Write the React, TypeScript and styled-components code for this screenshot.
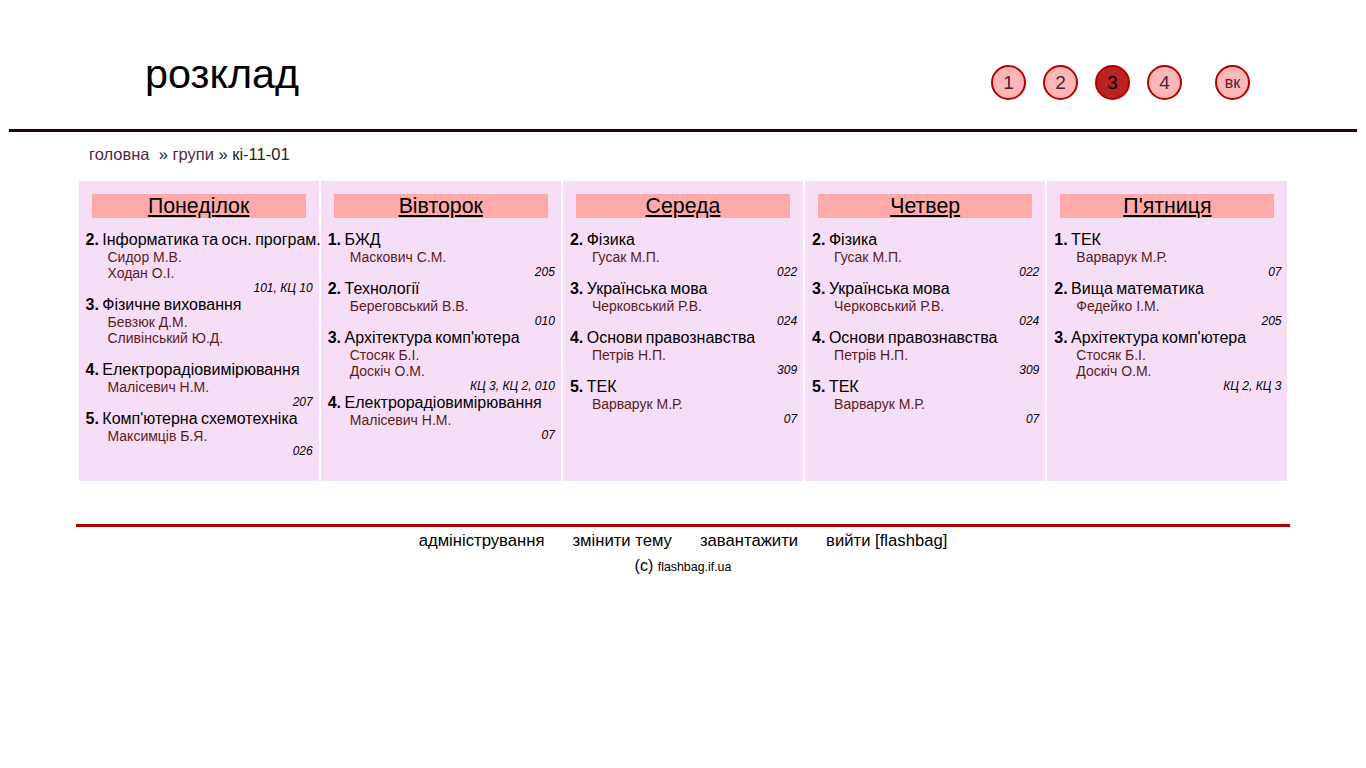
import { createGlobalStyle, styled } from "styled-components";

const GlobalStyle = createGlobalStyle`
  body {
    margin: 0;
    background: #fff;
    font-family: "Liberation Sans", Arial, sans-serif;
    color: #000;
  }
`;

const Header = styled.header`
  display: flex;
  justify-content: space-between;
  align-items: flex-start;
  height: 129px;
  margin: 0 9px;
  border-bottom: 3px solid #2b0000;
`;

const Title = styled.h1`
  margin: 49px 0 0 136px;
  font-size: 41.3px;
  font-weight: normal;
  line-height: 50px;
`;

const Nav = styled.nav`
  display: flex;
  gap: 17px;
  margin: 65px 107px 0 0;
`;

const Circle = styled.a<{ $active?: boolean; $far?: boolean }>`
  width: 35px;
  height: 35px;
  box-sizing: border-box;
  border-radius: 50%;
  border: 2px solid #b30000;
  background: ${(p) => (p.$active ? "#bb2222" : "#ffb6b6")};
  color: ${(p) => (p.$active ? "#000" : "#4d2438")};
  display: flex;
  align-items: center;
  justify-content: center;
  font-size: ${(p) => (p.$far ? "16px" : "19px")};
  margin-left: ${(p) => (p.$far ? "16px" : "0")};
  text-decoration: none;
`;

const Crumbs = styled.div`
  padding: 13px 0 0 89px;
  font-size: 16.5px;
  line-height: 18px;
  color: #222;
`;

const CrumbLink = styled.a`
  color: #4d2a3d;
  text-decoration: none;
`;

const Week = styled.div`
  width: 1209px;
  min-height: 300px;
  margin: 18px auto 0;
  display: grid;
  grid-template-columns: repeat(5, minmax(0, 1fr));
  gap: 2px;
`;

const Day = styled.div`
  background: #f7def7;
  padding: 13px 6px 8px 7px;
`;

const DayName = styled.div`
  margin: 0 7px 12px 6px;
  height: 24px;
  line-height: 24px;
  background: #ffaaaa;
  text-align: center;
  font-size: 21.33px;
  text-decoration: underline;
`;

const Lesson = styled.div`
  display: flex;
  flex-direction: column;
`;

const Subject = styled.div`
  position: relative;
  font-size: 16px;
  line-height: 19px;
  white-space: nowrap;
  word-spacing: -1px;
  b {
    font-weight: bold;
  }
`;

const Teacher = styled.div`
  padding-left: 22px;
  font-size: 14px;
  line-height: 16px;
  color: #5b1c1c;
  &:first-of-type {
    margin-top: 1px;
  }
`;

const Room = styled.div`
  text-align: right;
  font-size: 12px;
  line-height: 14px;
  height: 14px;
  font-style: italic;
`;

const Footer = styled.footer`
  width: 1214px;
  margin: 43px auto 0;
  border-top: 3px solid #b30000;
  padding-top: 4px;
  text-align: center;
`;

const FooterLinks = styled.div`
  display: flex;
  justify-content: center;
  gap: 28px;
  font-size: 16.67px;
  line-height: 19px;
`;

const FooterLink = styled.a`
  color: #000;
  text-decoration: none;
`;

const Copy = styled.div`
  margin-top: 7px;
  font-size: 16px;
  line-height: 17px;
  small {
    font-size: 12.4px;
  }
`;

type LessonData = { n: number; name: string; teachers: string[]; room: string };

const week: { day: string; lessons: LessonData[] }[] = [
  {
    day: "Понеділок",
    lessons: [
      { n: 2, name: "Інформатика та осн. програм.", teachers: ["Сидор М.В.", "Ходан О.І."], room: "101, КЦ 10" },
      { n: 3, name: "Фізичне виховання", teachers: ["Бевзюк Д.М.", "Сливінський Ю.Д."], room: "" },
      { n: 4, name: "Електрорадіовимірювання", teachers: ["Малісевич Н.М."], room: "207" },
      { n: 5, name: "Комп'ютерна схемотехніка", teachers: ["Максимців Б.Я."], room: "026" },
    ],
  },
  {
    day: "Вівторок",
    lessons: [
      { n: 1, name: "БЖД", teachers: ["Маскович С.М."], room: "205" },
      { n: 2, name: "Технології", teachers: ["Береговський В.В."], room: "010" },
      { n: 3, name: "Архітектура комп'ютера", teachers: ["Стосяк Б.І.", "Доскіч О.М."], room: "КЦ 3, КЦ 2, 010" },
      { n: 4, name: "Електрорадіовимірювання", teachers: ["Малісевич Н.М."], room: "07" },
    ],
  },
  {
    day: "Середа",
    lessons: [
      { n: 2, name: "Фізика", teachers: ["Гусак М.П."], room: "022" },
      { n: 3, name: "Українська мова", teachers: ["Черковський Р.В."], room: "024" },
      { n: 4, name: "Основи правознавства", teachers: ["Петрів Н.П."], room: "309" },
      { n: 5, name: "ТЕК", teachers: ["Варварук М.Р."], room: "07" },
    ],
  },
  {
    day: "Четвер",
    lessons: [
      { n: 2, name: "Фізика", teachers: ["Гусак М.П."], room: "022" },
      { n: 3, name: "Українська мова", teachers: ["Черковський Р.В."], room: "024" },
      { n: 4, name: "Основи правознавства", teachers: ["Петрів Н.П."], room: "309" },
      { n: 5, name: "ТЕК", teachers: ["Варварук М.Р."], room: "07" },
    ],
  },
  {
    day: "П'ятниця",
    lessons: [
      { n: 1, name: "ТЕК", teachers: ["Варварук М.Р."], room: "07" },
      { n: 2, name: "Вища математика", teachers: ["Федейко І.М."], room: "205" },
      { n: 3, name: "Архітектура комп'ютера", teachers: ["Стосяк Б.І.", "Доскіч О.М."], room: "КЦ 2, КЦ 3" },
    ],
  },
];

export default function App() {
  return (
    <>
      <GlobalStyle />
      <Header>
        <Title>розклад</Title>
        <Nav>
          <Circle href="#">1</Circle>
          <Circle href="#">2</Circle>
          <Circle href="#" $active>3</Circle>
          <Circle href="#">4</Circle>
          <Circle href="#" $far>вк</Circle>
        </Nav>
      </Header>
      <Crumbs>
        <CrumbLink href="#">головна</CrumbLink>&nbsp; » <CrumbLink href="#">групи</CrumbLink> » кі-11-01
      </Crumbs>
      <Week>
        {week.map((d) => (
          <Day key={d.day}>
            <DayName>{d.day}</DayName>
            {d.lessons.map((l) => (
              <Lesson key={l.n}>
                <Subject>
                  <b>{l.n}.</b> {l.name}
                </Subject>
                {l.teachers.map((t) => (
                  <Teacher key={t}>{t}</Teacher>
                ))}
                <Room>{l.room}</Room>
              </Lesson>
            ))}
          </Day>
        ))}
      </Week>
      <Footer>
        <FooterLinks>
          <FooterLink href="#">адміністрування</FooterLink>
          <FooterLink href="#">змінити тему</FooterLink>
          <FooterLink href="#">завантажити</FooterLink>
          <FooterLink href="#">вийти [flashbag]</FooterLink>
        </FooterLinks>
        <Copy>
          (c) <small>flashbag.if.ua</small>
        </Copy>
      </Footer>
    </>
  );
}
